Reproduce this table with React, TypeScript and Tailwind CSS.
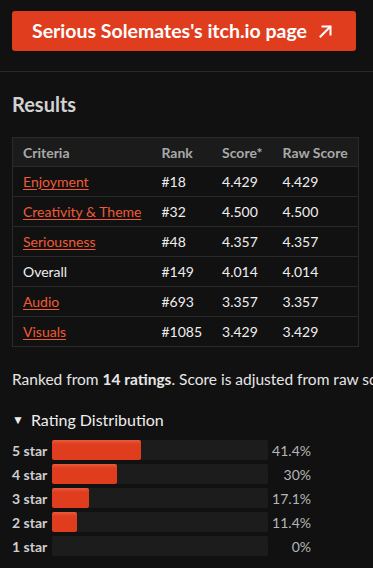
import React from 'react';

const rows = [
    { name: 'Enjoyment', rank: '#18', score: '4.429', raw: '4.429', link: true },
    { name: 'Creativity & Theme', rank: '#32', score: '4.500', raw: '4.500', link: true },
    { name: 'Seriousness', rank: '#48', score: '4.357', raw: '4.357', link: true },
    { name: 'Overall', rank: '#149', score: '4.014', raw: '4.014', link: false },
    { name: 'Audio', rank: '#693', score: '3.357', raw: '3.357', link: true },
    { name: 'Visuals', rank: '#1085', score: '3.429', raw: '3.429', link: true },
];

const distribution = [
    { label: '5 star', pct: 41.4, text: '41.4%' },
    { label: '4 star', pct: 30, text: '30%' },
    { label: '3 star', pct: 17.1, text: '17.1%' },
    { label: '2 star', pct: 11.4, text: '11.4%' },
    { label: '1 star', pct: 0, text: '0%' },
];

const App: React.FC = () => {
    return (
        <div className="min-h-[568px] w-[373px] overflow-hidden bg-[#111111] text-[14px] text-[#e6e6e6] font-['Lato','Noto_Sans',sans-serif]">
            <div className="px-[12px] pt-[11px] pb-[20px]">
                <a className="flex items-center h-[40px] w-[344px] pl-[20px] rounded-[3px] bg-[#e03d1f] text-white text-[19.5px] font-bold">
                    <span>Serious Solemates's itch.io page</span>
                    <svg className="ml-[12px]" width="13" height="13" viewBox="0 0 13 13" fill="none" stroke="white" strokeWidth="2" strokeLinecap="square">
                        <path d="M1.5 11.5 L11 2" />
                        <path d="M3.5 1.5 H11.5 V9.5" />
                    </svg>
                </a>
            </div>

            <div className="border-t border-[#2a2a2a]" />

            <div className="px-[12px]">
                <h2 className="mt-[20px] text-[20px] leading-[24px] font-bold text-[#d2d2d2]">Results</h2>

                <table className="mt-[21px] border-collapse border border-[#2a2a2a] whitespace-nowrap">
                    <thead>
                        <tr className="bg-[#1b1b1b] h-[29px]">
                            <th className="px-[10px] text-left font-bold text-[#a9a9a9]">Criteria</th>
                            <th className="px-[10px] text-left font-bold text-[#a9a9a9]">Rank</th>
                            <th className="px-[10px] text-left font-bold text-[#a9a9a9]">Score*</th>
                            <th className="px-[10px] text-left font-bold text-[#a9a9a9]">Raw Score</th>
                        </tr>
                    </thead>
                    <tbody>
                        {rows.map(r => (
                            <tr key={r.name} className="h-[30px] border-t border-[#2a2a2a]">
                                <td className="px-[10px]">
                                    {r.link ? (
                                        <a className="text-[#f05a38] underline underline-offset-2">{r.name}</a>
                                    ) : (
                                        <span className="text-[#eeeeee]">{r.name}</span>
                                    )}
                                </td>
                                <td className="px-[10px] text-[#eeeeee]">{r.rank}</td>
                                <td className="px-[10px] text-[#eeeeee]">{r.score}</td>
                                <td className="px-[10px] text-[#eeeeee]">{r.raw}</td>
                            </tr>
                        ))}
                    </tbody>
                </table>

                <p className="mt-[21px] text-[15.5px] leading-[22px] whitespace-nowrap text-[#e6e6e6]">
                    Ranked from <strong className="font-bold">14 ratings</strong>. Score is adjusted from raw score
                </p>

                <div className="mt-[18px] flex items-center text-[16px] leading-[24px] text-[#eeeeee]">
                    <span className="text-[12px] mr-[7px]">▼</span>
                    <span>Rating Distribution</span>
                </div>

                <div className="mt-[8px] flex flex-col gap-[4px]">
                    {distribution.map(d => (
                        <div key={d.label} className="flex items-center h-[20px]">
                            <div className="w-[40px] font-bold text-[#cfcfcf]">{d.label}</div>
                            <div className="w-[216px] h-[20px] rounded-[2px] bg-[#1c1c1c]">
                                <div
                                    className="h-full rounded-[2px] bg-[#e03d1f] bg-gradient-to-b from-[#ea5a3c] to-[#e03d1f] to-[20%]"
                                    style={{ width: `${d.pct}%` }}
                                />
                            </div>
                            <div className="w-[43px] text-right text-[#b5b5b5]">{d.text}</div>
                        </div>
                    ))}
                </div>
            </div>
        </div>
    );
};

export default App;
